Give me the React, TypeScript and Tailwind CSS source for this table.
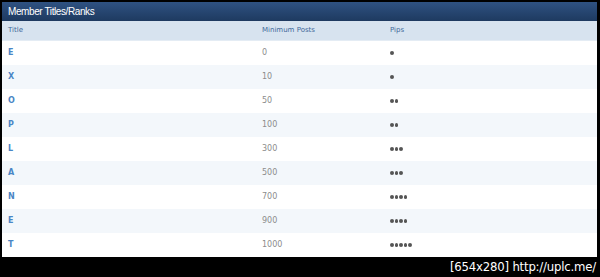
import React from "react";

const rows: [string, string, number][] = [
  ["E", "0", 1],
  ["X", "10", 1],
  ["O", "50", 2],
  ["P", "100", 2],
  ["L", "300", 3],
  ["A", "500", 3],
  ["N", "700", 4],
  ["E", "900", 4],
  ["T", "1000", 5],
];

export default function App() {
  return (
    <div className="w-[600px] h-[277px] bg-black pt-[2px] pl-[2px] pr-[3px] flex flex-col" style={{ fontFamily: '"DejaVu Sans", "Liberation Sans", sans-serif' }}>
      <div className="h-[19px] bg-gradient-to-b from-[#2f5282] to-[#1e3a60] flex items-center pl-[6px] text-white text-[10px] tracking-[-0.4px]" style={{ fontFamily: '"Liberation Sans", sans-serif' }}>
        Member Titles/Ranks
      </div>
      <div className="h-[20px] bg-[#d7e3ef] flex items-center text-[#41699a] text-[7px] font-medium border-b border-[#e4ecf4]">
        <div className="w-[260px] pl-[6px]">Title</div>
        <div className="w-[128px]">Minimum Posts</div>
        <div>Pips</div>
      </div>
      {rows.map(([t, n, p], i) => (
        <div key={i} className={`h-[24px] flex items-center ${i % 2 === 1 ? "bg-[#f3f7fb]" : "bg-white"}`}>
          <div className="w-[260px] pl-[6px] text-[8px] font-bold text-[#4a86c5]">{t}</div>
          <div className="w-[128px] text-[8px] text-[#8c8c8c]">{n}</div>
          <div className="flex gap-[1px]">
            {Array.from({ length: p }).map((_, k) => (
              <span key={k} className="w-[3.5px] h-[3.5px] rounded-full bg-[#555]" />
            ))}
          </div>
        </div>
      ))}
      <div className="flex-1 flex items-center justify-end pr-[1px] text-white text-[13px] tracking-[-0.2px]" style={{ fontFamily: '"DejaVu Sans Condensed", "Liberation Sans Narrow", sans-serif' }}>
        [654x280] http://uplc.me/
      </div>
    </div>
  );
}
